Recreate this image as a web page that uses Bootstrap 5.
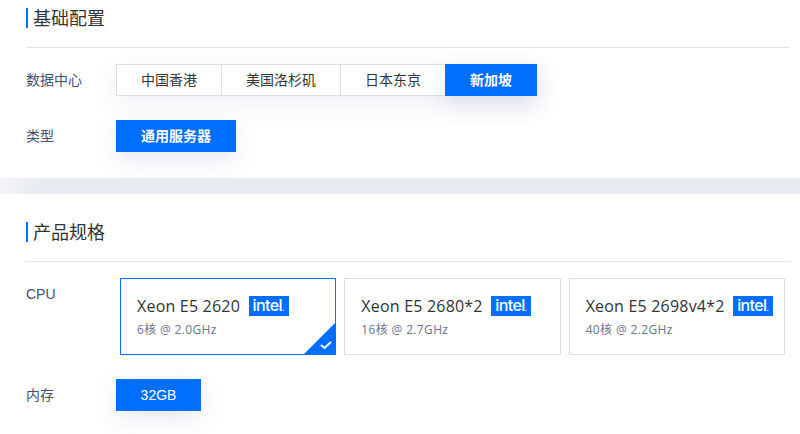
<!DOCTYPE html>
<html lang="zh">
<head>
<meta charset="utf-8">
<link href="https://cdn.jsdelivr.net/npm/bootstrap@5.3.0/dist/css/bootstrap.min.css" rel="stylesheet">
<style>
html,body{height:434px;overflow:hidden;background:#fff}
body{font-family:"Liberation Sans","Noto Sans CJK SC",sans-serif;font-size:14px;color:#333}
.cfg-sec{padding:0 10px 0 26px}
.cfg-first{height:178px;padding-top:8px}
.cfg-band{height:16px;background:linear-gradient(90deg,#f3f4f7 0,#e8ebf1 40px)}
.cfg-second{padding-top:28px}
.cfg-title{border-left:2px solid #006eff;height:20px;line-height:22px;padding-left:5px;font-size:18px;color:#333}
.cfg-rule{border-top:1px solid #e3e3e3;margin-top:19px}
.cfg-row{min-height:32px}
.cfg-label{width:90px;flex:none;color:#46506e;font-size:14px;line-height:32px}
.cfg-seg{box-shadow:0 8px 24px rgba(60,80,130,.09)}
.cfg-opt{height:32px;line-height:30px;border:1px solid #dedede;margin-left:-1px;text-align:center;color:#333;background:#fff;font-size:14px}
.cfg-opt:first-child{margin-left:0}
.cfg-on{height:32px;line-height:32px;background:#006eff;color:#fff;text-align:center;font-weight:700;font-size:14px;box-shadow:0 8px 24px rgba(60,80,130,.12)}
.w-a{width:106px}.w-b{width:120px}.w-c{width:106px}.w-d{width:92px;margin-left:-1px}.w-e{width:120px}
.w-f{width:85px;font-weight:400;font-size:14px}
.cfg-cards{margin-left:4px;gap:8px;width:665px}
.cfg-card{flex:1 1 0;height:77px;border:1px solid #dedede;padding:17px 0 0 16px;position:relative;overflow:hidden}
.cfg-card-on{border-color:#006eff}
.cfg-name{font-size:16px;color:#333;line-height:20px;white-space:nowrap;font-family:"Open Sans","Noto Sans CJK SC",sans-serif;letter-spacing:.2px}
.cfg-sub{font-size:12px;color:#6b7390;line-height:16px;margin-top:6px;font-family:"Open Sans","Noto Sans CJK SC",sans-serif;letter-spacing:.35px}
.cfg-intel{display:inline-block;width:40px;height:20px;line-height:19px;background:#006eff;color:#fff;font-family:"Inter",sans-serif;font-weight:500;font-size:16px;letter-spacing:-.6px;text-align:center;margin-left:8.500px;vertical-align:top}
.cfg-dot{font-size:8px;letter-spacing:0}
.cfg-tick{position:absolute;right:0;bottom:0;display:block}
.cfg-mem{margin-top:24px}
</style>
</head>
<body>
<section class="cfg-sec cfg-first">
  <div class="cfg-title">基础配置</div>
  <div class="cfg-rule"></div>
  <div class="d-flex cfg-row mt-3">
    <div class="cfg-label">数据中心</div>
    <div class="d-flex cfg-seg">
      <div class="cfg-opt w-a">中国香港</div>
      <div class="cfg-opt w-b">美国洛杉矶</div>
      <div class="cfg-opt w-c">日本东京</div>
      <div class="cfg-on w-d">新加坡</div>
    </div>
  </div>
  <div class="d-flex cfg-row cfg-mem">
    <div class="cfg-label">类型</div>
    <div class="cfg-on w-e">通用服务器</div>
  </div>
</section>
<div class="cfg-band"></div>
<section class="cfg-sec cfg-second">
  <div class="cfg-title">产品规格</div>
  <div class="cfg-rule"></div>
  <div class="d-flex mt-3">
    <div class="cfg-label">CPU</div>
    <div class="d-flex cfg-cards">
      <div class="cfg-card cfg-card-on">
        <div class="cfg-name">Xeon E5 2620<span class="cfg-intel">intel<span class="cfg-dot">.</span></span></div>
        <div class="cfg-sub">6核 @ 2.0GHz</div>
        <svg class="cfg-tick" width="31" height="31" viewBox="0 0 31 31"><path d="M31 0V31H0Z" fill="#006eff"/><path d="M17 22l3.500 3 6.500-6" fill="none" stroke="#fff" stroke-width="2"/></svg>
      </div>
      <div class="cfg-card">
        <div class="cfg-name">Xeon E5 2680*2<span class="cfg-intel">intel<span class="cfg-dot">.</span></span></div>
        <div class="cfg-sub">16核 @ 2.7GHz</div>
      </div>
      <div class="cfg-card">
        <div class="cfg-name">Xeon E5 2698v4*2<span class="cfg-intel">intel<span class="cfg-dot">.</span></span></div>
        <div class="cfg-sub">40核 @ 2.2GHz</div>
      </div>
    </div>
  </div>
  <div class="d-flex cfg-row cfg-mem">
    <div class="cfg-label">内存</div>
    <div class="cfg-on w-f">32GB</div>
  </div>
</section>
<script src="https://cdn.jsdelivr.net/npm/bootstrap@5.3.0/dist/js/bootstrap.bundle.min.js"></script>
</body>
</html>
